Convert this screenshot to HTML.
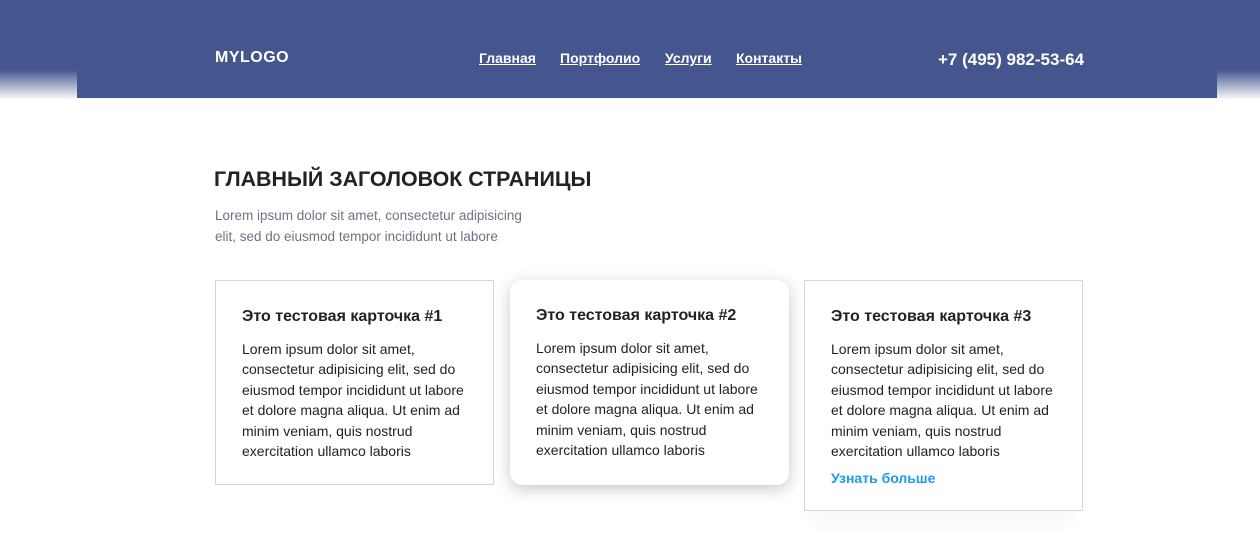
<!DOCTYPE html><html><head><meta charset="utf-8"><style>
body{margin:0;width:1260px;height:558px;overflow:hidden;background:#fff;font-family:"Liberation Sans",Arial,sans-serif;position:relative}
.bg{position:absolute;left:0;top:0;width:1260px;height:100px;background:linear-gradient(#45568e 0,#45568e 70px,#fff 100px)}
.hdr{position:absolute;left:77px;top:0;width:1140px;height:98px;background:#45568e}
.logo{position:absolute;left:215px;top:49px;color:#fff;font-weight:bold;font-size:16px;letter-spacing:.5px}
.nav{position:absolute;top:50px;color:#fff;font-weight:bold;font-size:14px;text-decoration:underline}
.ph{position:absolute;left:938px;top:50px;color:#fff;font-weight:bold;font-size:17px}
h1{position:absolute;left:214px;top:167px;margin:0;font-size:21.4px;color:#222;font-weight:bold}
.sub{position:absolute;left:215px;top:205px;font-size:13.5px;line-height:21px;color:#6e7383;width:310px}
.card{position:absolute;top:280px;width:279px;box-sizing:border-box;border:1px solid #d6d6d6;background:#fff;padding:26px 24px 0 26px}
.card h3{margin:0 0 12px;font-size:16px;color:#222;font-weight:bold;line-height:20px}
.card p{margin:0;font-size:14px;line-height:20.4px;color:#222}
.more{color:#1b9be8;font-weight:bold;font-size:14px;margin-top:9px}
</style></head><body>
<div class="bg"></div><div class="hdr"></div>
<div class="logo">MYLOGO</div>
<div class="nav" style="left:479px">Главная</div>
<div class="nav" style="left:560px">Портфолио</div>
<div class="nav" style="left:665px">Услуги</div>
<div class="nav" style="left:736px">Контакты</div>
<div class="ph">+7 (495) 982-53-64</div>
<h1>ГЛАВНЫЙ ЗАГОЛОВОК СТРАНИЦЫ</h1>
<div class="sub">Lorem ipsum dolor sit amet, consectetur adipisicing elit, sed do eiusmod tempor incididunt ut labore</div>
<div class="card" style="left:215px;height:205px"><h3>Это тестовая карточка #1</h3><p>Lorem ipsum dolor sit amet, consectetur adipisicing elit, sed do eiusmod tempor incididunt ut labore et dolore magna aliqua. Ut enim ad minim veniam, quis nostrud exercitation ullamco laboris</p></div>
<div class="card" style="left:510px;height:205px;border:none;border-radius:12px;box-shadow:0 4px 16px rgba(0,0,0,.22)"><h3>Это тестовая карточка #2</h3><p>Lorem ipsum dolor sit amet, consectetur adipisicing elit, sed do eiusmod tempor incididunt ut labore et dolore magna aliqua. Ut enim ad minim veniam, quis nostrud exercitation ullamco laboris</p></div>
<div class="card" style="left:804px;height:231px;box-shadow:0 20px 20px -10px rgba(0,0,0,.04)"><h3>Это тестовая карточка #3</h3><p>Lorem ipsum dolor sit amet, consectetur adipisicing elit, sed do eiusmod tempor incididunt ut labore et dolore magna aliqua. Ut enim ad minim veniam, quis nostrud exercitation ullamco laboris</p><div class="more">Узнать больше</div></div>
</body></html>
